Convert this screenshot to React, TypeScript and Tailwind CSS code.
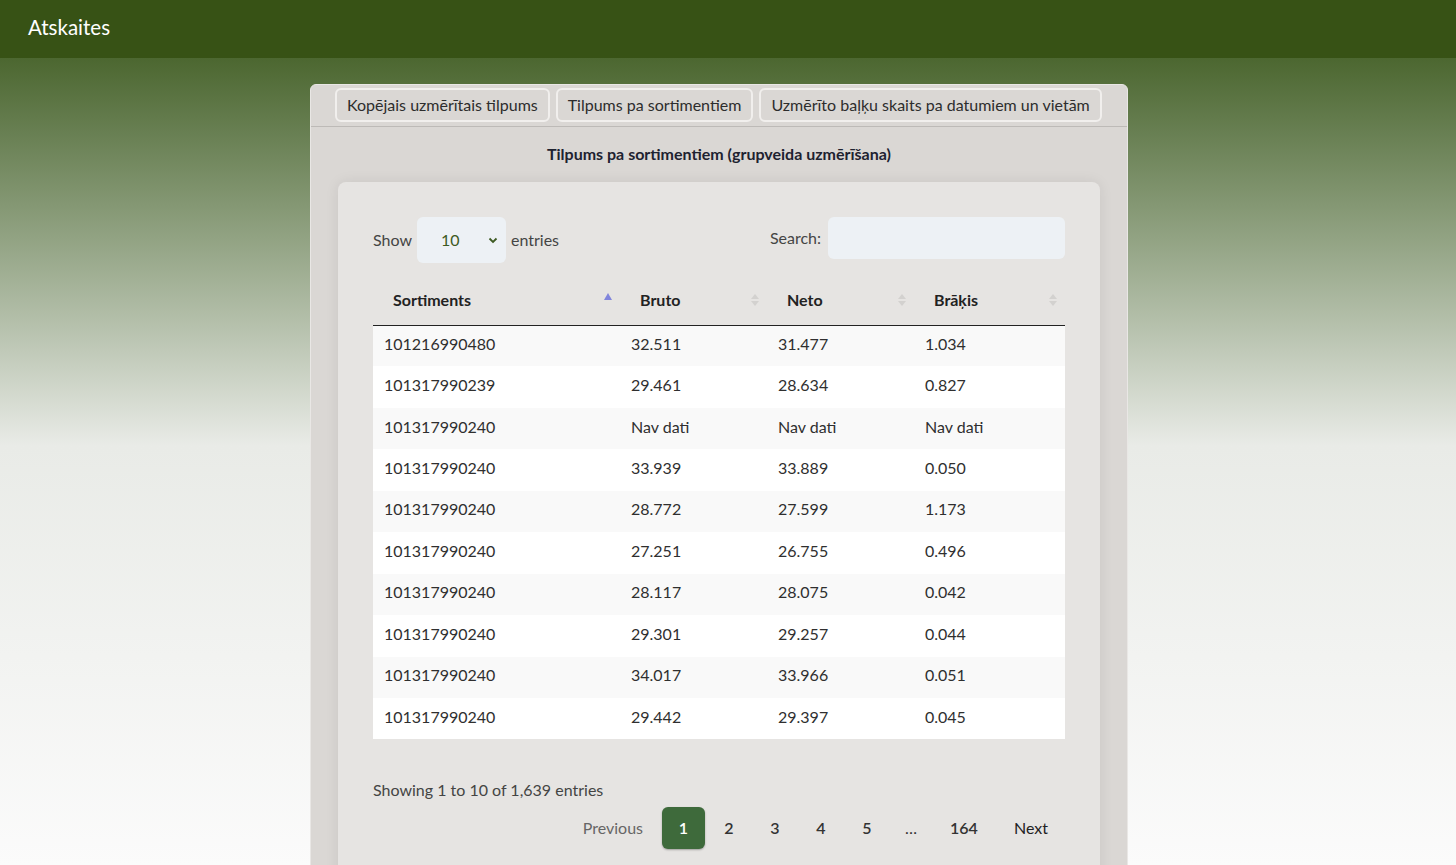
import React from 'react'

const rows: [string, string, string, string][] = [
  ['101216990480', '32.511', '31.477', '1.034'],
  ['101317990239', '29.461', '28.634', '0.827'],
  ['101317990240', 'Nav dati', 'Nav dati', 'Nav dati'],
  ['101317990240', '33.939', '33.889', '0.050'],
  ['101317990240', '28.772', '27.599', '1.173'],
  ['101317990240', '27.251', '26.755', '0.496'],
  ['101317990240', '28.117', '28.075', '0.042'],
  ['101317990240', '29.301', '29.257', '0.044'],
  ['101317990240', '34.017', '33.966', '0.051'],
  ['101317990240', '29.442', '29.397', '0.045'],
]

const SortBoth = () => (
  <span className="flex flex-col items-center gap-[2px]">
    <span className="h-0 w-0 border-x-[4px] border-b-[5px] border-x-transparent border-b-[#d3d1cf]" />
    <span className="h-0 w-0 border-x-[4px] border-t-[5px] border-x-transparent border-t-[#d3d1cf]" />
  </span>
)

const SortAsc = () => (
  <span className="mb-[7px] h-0 w-0 border-x-[4px] border-b-[7px] border-x-transparent border-b-[#8185dc]" />
)

const App: React.FC = () => {
  return (
    <div className="min-h-[865px] bg-white font-['Lato','Liberation_Sans',sans-serif] text-[#333]">
      <header className="flex h-[58px] items-center bg-[#375215] px-7 pb-[3px]">
        <h1 className="text-[20.5px] text-white">Atskaites</h1>
      </header>

      <main className="h-[807px] overflow-hidden bg-linear-to-b from-[#4c6730] via-[#e9ebe7] via-48% to-[#fbfbfb] pt-[26px]">
        <div className="ml-[310px] w-[818px] rounded-t-md border border-[#e9e7e5] bg-[#dad7d4]">
          <div className="flex gap-[6px] border-b border-[#bdbab7] pb-[4px] pl-6 pt-[3px]">
            <button className="h-[34px] rounded-md border-2 border-[#f1efed] px-[10px] text-[16px] text-[#2d2d2d]">
              Kopējais uzmērītais tilpums
            </button>
            <button className="h-[34px] rounded-md border-2 border-[#f1efed] px-[10px] text-[16px] text-[#2d2d2d]">
              Tilpums pa sortimentiem
            </button>
            <button className="h-[34px] rounded-md border-2 border-[#f1efed] px-[10px] text-[16px] text-[#2d2d2d]">
              Uzmērīto baļķu skaits pa datumiem un vietām
            </button>
          </div>

          <h2 className="pb-[16px] pt-[15px] text-center text-[16px] font-bold text-[#1e2230]">
            Tilpums pa sortimentiem (grupveida uzmērīšana)
          </h2>

          <div className="mx-[27px] rounded-t-lg bg-[#e6e4e2] px-[35px] pb-10 pt-[35px] shadow-[0_0_14px_rgba(0,0,0,0.08)]">
            <div className="flex items-start justify-between">
              <label className="flex items-center gap-[5px] text-[16px] text-[#444]">
                Show
                <span className="relative flex h-[46px] w-[89px] items-center rounded-md bg-[#edf1f5] pl-6 text-[#3d5a22]">
                  10
                  <svg className="absolute right-[8px] top-[19px]" width="10" height="8" viewBox="0 0 10 8">
                    <path d="M1.5 2.5 L5 6 L8.5 2.5" fill="none" stroke="#3d5a22" strokeWidth="1.8" />
                  </svg>
                </span>
                entries
              </label>
              <label className="flex items-center gap-[7px] text-[16px] text-[#444]">
                Search:
                <input className="h-[42px] w-[237px] rounded-md bg-[#edf1f5] outline-none" />
              </label>
            </div>

            <table className="mt-[17px] w-full table-fixed border-collapse text-[16px]">
              <colgroup>
                <col className="w-[247px]" />
                <col className="w-[147px]" />
                <col className="w-[147px]" />
                <col />
              </colgroup>
              <thead>
                <tr className="h-[45px] border-b border-[#222]">
                  <th className="pb-[4px] pl-5 pr-2 text-left font-bold text-[#222]">
                    <div className="flex items-center justify-between">Sortiments<SortAsc /></div>
                  </th>
                  <th className="pb-[4px] pl-5 pr-2 text-left font-bold text-[#222]">
                    <div className="flex items-center justify-between">Bruto<SortBoth /></div>
                  </th>
                  <th className="pb-[4px] pl-5 pr-2 text-left font-bold text-[#222]">
                    <div className="flex items-center justify-between">Neto<SortBoth /></div>
                  </th>
                  <th className="pb-[4px] pl-5 pr-2 text-left font-bold text-[#222]">
                    <div className="flex items-center justify-between">Brāķis<SortBoth /></div>
                  </th>
                </tr>
              </thead>
              <tbody>
                {rows.map((r, i) => (
                  <tr key={i} className={i % 2 === 0 ? 'h-[41.45px] bg-[#f9f9f9]' : 'h-[41.45px] bg-white'}>
                    {r.map((c, j) => (
                      <td key={j} className="pb-[4px] pl-[11px] text-[#2f2f2f]">
                        {c}
                      </td>
                    ))}
                  </tr>
                ))}
              </tbody>
            </table>

            <p className="mt-[39px] text-[16px] text-[#444]">Showing 1 to 10 of 1,639 entries</p>

            <div className="mt-[4px] flex items-center justify-end gap-[2px] text-[16px] font-semibold text-[#333]">
              <span className="px-[17px] py-[10px] font-normal text-[#666]">Previous</span>
              <span className="flex h-[42px] w-[43px] items-center justify-center rounded-md bg-[#3e6a3b] text-white shadow-[0_1px_2px_rgba(0,0,0,0.3)]">
                1
              </span>
              <span className="flex h-[42px] w-[44px] items-center justify-center">2</span>
              <span className="flex h-[42px] w-[44px] items-center justify-center">3</span>
              <span className="flex h-[42px] w-[44px] items-center justify-center">4</span>
              <span className="flex h-[42px] w-[44px] items-center justify-center">5</span>
              <span className="flex h-[42px] w-[40px] items-center justify-center font-normal">…</span>
              <span className="flex h-[42px] w-[62px] items-center justify-center">164</span>
              <span className="flex h-[42px] items-center px-[17px] font-normal text-[#222]">Next</span>
            </div>
          </div>
        </div>
      </main>
    </div>
  )
}

export default App
